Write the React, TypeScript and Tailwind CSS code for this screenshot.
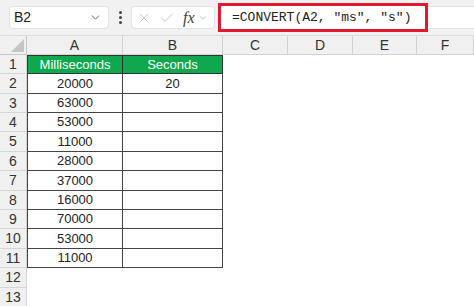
import { ChevronDown, X, Check } from 'lucide-react'

const cols = ['A', 'B', 'C', 'D', 'E', 'F']
const data = [20000, 63000, 53000, 11000, 28000, 37000, 16000, 70000, 53000, 11000]
const rowHeights = [
  'h-[19px]', 'h-[20px]', 'h-[19px]', 'h-[19px]', 'h-[20px]', 'h-[19px]', 'h-[20px]',
  'h-[19px]', 'h-[19px]', 'h-[20px]', 'h-[19px]', 'h-[20px]', 'h-[19px]',
]

export default function App() {
  return (
    <div className="w-[474px] h-[306px] overflow-hidden bg-white font-['Liberation_Sans',sans-serif] text-[#222]">
      <Toolbar />
      <Sheet />
    </div>
  )
}

function Toolbar() {
  return (
    <div className="h-[36px] flex items-center bg-[#f1f1f1] pl-[9px] border-b border-[#dcdcdc]">
      <div className="w-[100px] h-[23px] bg-white rounded-[4px] border border-[#e2e2e2] flex items-center justify-between pl-[4px] pr-[6px] text-[14px]">
        <span>B2</span>
        <ChevronDown size={13} strokeWidth={1.6} className="text-[#555]" />
      </div>
      <div className="w-[22px] flex flex-col items-center gap-[2px]">
        <span className="w-[3px] h-[3px] bg-[#444] rounded-full" />
        <span className="w-[3px] h-[3px] bg-[#444] rounded-full" />
        <span className="w-[3px] h-[3px] bg-[#444] rounded-full" />
      </div>
      <div className="w-[84px] h-[23px] bg-white rounded-[4px] border border-[#e2e2e2] flex items-center pl-[4px]">
        <X size={16} strokeWidth={1.1} className="text-[#b4b4b4]" />
        <Check size={16} strokeWidth={1.1} className="text-[#b4b4b4] ml-[7px]" />
        <span className="ml-[8px] font-['Liberation_Serif',serif] italic text-[16px] text-[#444] leading-none">
          fx
        </span>
        <ChevronDown size={10} strokeWidth={1.4} className="text-[#999] ml-[3px]" />
      </div>
      <div className="ml-[3px] w-[210px] h-[29px] border-[3px] border-[#e2192c] bg-white flex items-center pl-[11px] font-['Liberation_Mono',monospace] text-[13px] text-[#222] whitespace-pre">
        =CONVERT(A2, "ms", "s")
      </div>
      <div className="flex-1 h-[23px] bg-white border-y border-[#e2e2e2]" />
    </div>
  )
}

function Sheet() {
  return (
    <div className="grid grid-cols-[27px_96px_100px_65px_65px_64px_1fr] text-[13px]">
      <div className="h-[19px] bg-[#f0f0f0] border-r border-b border-[#c8c8c8] relative">
        <div className="absolute right-[2px] bottom-[2px] w-0 h-0 border-l-[13px] border-l-transparent border-b-[13px] border-b-[#c4c4c4]" />
      </div>
      {cols.map((c) => (
        <div
          key={c}
          className="h-[19px] bg-[#f0f0f0] border-r border-b border-[#d2d2d2] flex items-center justify-center text-[14px] text-[#333]"
        >
          {c}
        </div>
      ))}

      {rowHeights.map((h, i) => (
        <Row key={i + 1} r={i + 1} h={h} />
      ))}
    </div>
  )
}

function Row({ r, h }: { r: number; h: string }) {
  const head = r === 1
  const inTable = r <= 11
  const a = head ? 'Milliseconds' : inTable ? String(data[r - 2]) : ''
  const b = head ? 'Seconds' : r === 2 ? '20' : ''
  const tableCell = head
    ? 'bg-[#10a84e] text-white border-[#333] border-b border-r border-t'
    : 'bg-white border-[#444] border-b border-r'
  return (
    <>
      <div
        className={`${h} bg-[#f0f0f0] border-r border-b border-[#d6d6d6] flex items-center justify-center text-[14px] text-[#333]`}
      >
        {r}
      </div>
      {inTable ? (
        <>
          <div className={`${h} ${tableCell} border-l flex items-center justify-center`}>{a}</div>
          <div className={`${h} ${tableCell} flex items-center justify-center`}>{b}</div>
        </>
      ) : (
        <>
          <div className={`${h} bg-white`} />
          <div className={`${h} bg-white`} />
        </>
      )}
      <div className={`${h} bg-white`} />
      <div className={`${h} bg-white`} />
      <div className={`${h} bg-white`} />
      <div className={`${h} bg-white`} />
    </>
  )
}
